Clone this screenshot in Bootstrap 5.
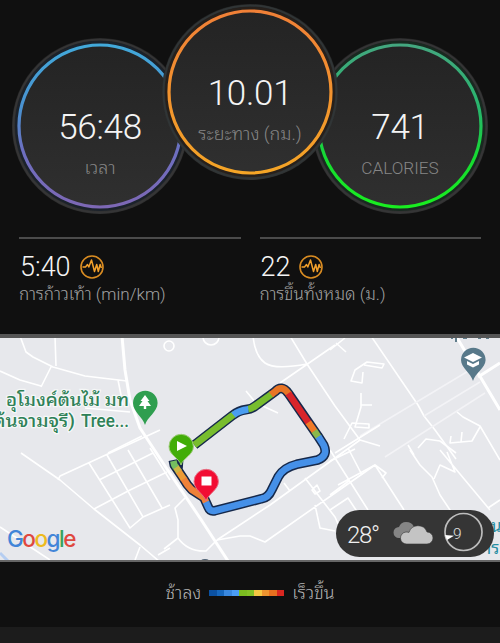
<!DOCTYPE html>
<html lang="th">
<head>
<meta charset="utf-8">
<meta name="viewport" content="width=device-width, initial-scale=1">
<title>Activity</title>
<link href="https://cdn.jsdelivr.net/npm/bootstrap@5.3.0/dist/css/bootstrap.min.css" rel="stylesheet">
<style>
body{background:#101010;font-family:Roboto,"Noto Sans Thai Looped",Loma,Garuda,Waree,"Droid Sans Thai","Noto Sans Thai",sans-serif;color:#f4f4f4;height:643px;overflow:hidden}
.dials{height:237px;padding:38px 12px 0}
.dial{width:176px;height:176px;flex:none;background:linear-gradient(#232323,#303030);display:grid;border-radius:50%}
.dial>*{grid-area:1/1}
.dial-main{margin:-34px -26px 0;z-index:1;position:relative}
.dial-num{font-weight:300;font-size:35px;line-height:40px;padding-top:70px;letter-spacing:-.3px}
.dial-cap{font-weight:300;font-size:17.2px;line-height:22px;color:#868686;padding-top:9px}
.wide-cap{font-size:18px}
.stats{height:97px;padding:0 19px;column-gap:19px}
.stat{width:222px;border-top:2px solid #4b4b4b;padding-top:12px}
.stat-num{font-weight:300;font-size:27px;line-height:32px;gap:9px}
.stat-num span{padding-left:1px}
.stat-cap{font-weight:300;font-size:17.1px;line-height:22px;color:#a2a2a2;white-space:nowrap}
.map-frame{border-top:4px solid #555;border-bottom:2px solid #666;height:228px;background:#e7e8ec}
.weather{right:6px;bottom:3px;width:158px;height:47px;background:#353535;border-radius:24px;color:#eee}
.brand{left:7px;bottom:7px;font:500 22.5px/28px Inter,sans-serif;letter-spacing:-1.5px}
.legend{height:65px;font-weight:300;font-size:17.8px;color:#b5b5b5;padding-bottom:3px}
.scale i{width:7.5px;height:6px}
.foot{background:#1c1c1c;height:16px}
</style>
<script src="https://cdn.jsdelivr.net/npm/bootstrap@5.3.0/dist/js/bootstrap.bundle.min.js"></script>
</head>
<body class="m-0">
<section class="dials d-flex">
  <div class="dial">
    <svg width="176" height="176"><defs><linearGradient id="gb" x2="0" y2="1"><stop stop-color="#42a9da"/><stop offset=".4" stop-color="#4a90cf"/><stop offset=".65" stop-color="#6d6fc0"/><stop offset="1" stop-color="#7d68b5"/></linearGradient></defs><circle cx="88" cy="88" r="86.500" fill="none" stroke="#353536" stroke-width="2"/><circle cx="88" cy="88" r="83" fill="none" stroke="#1b222b" stroke-width="4"/><circle cx="88" cy="88" r="81" fill="none" stroke="url(#gb)" stroke-width="3.2"/></svg>
    <div class="text-center"><div class="dial-num">56:48</div><div class="dial-cap wide-cap">เวลา</div></div>
  </div>
  <div class="dial dial-main">
    <svg width="176" height="176"><defs><linearGradient id="go" x2="0" y2="1"><stop stop-color="#f08037"/><stop offset="1" stop-color="#f5a526"/></linearGradient></defs><circle cx="88" cy="88" r="86.500" fill="none" stroke="#303536" stroke-width="2"/><circle cx="88" cy="88" r="83" fill="none" stroke="#27201b" stroke-width="4"/><circle cx="88" cy="88" r="81" fill="none" stroke="url(#go)" stroke-width="3.2"/></svg>
    <div class="text-center"><div class="dial-num">10.01</div><div class="dial-cap wide-cap">ระยะทาง (กม.)</div></div>
  </div>
  <div class="dial">
    <svg width="176" height="176"><defs><linearGradient id="gg" x2="0" y2="1"><stop stop-color="#43a77f"/><stop offset=".4" stop-color="#27b66c"/><stop offset=".7" stop-color="#15dc30"/><stop offset="1" stop-color="#19ee20"/></linearGradient></defs><circle cx="88" cy="88" r="86.500" fill="none" stroke="#353536" stroke-width="2"/><circle cx="88" cy="88" r="83" fill="none" stroke="#182a20" stroke-width="4"/><circle cx="88" cy="88" r="81" fill="none" stroke="url(#gg)" stroke-width="3.2"/></svg>
    <div class="text-center"><div class="dial-num">741</div><div class="dial-cap">CALORIES</div></div>
  </div>
</section>
<section class="stats d-flex align-items-start">
  <div class="stat"><div class="stat-num d-flex align-items-center"><span>5:40</span><svg width="24" height="24" viewBox="0 0 24 24" fill="none" stroke="#d98c22"><circle cx="12" cy="12" r="11" stroke-width="1.6"/><path d="M2.500 12H5.500l2-2.500 1.300 2.500L11.500 5l3 11.500 2.200-7 1.600 7 1.800-7 1.300 3.500" stroke="#f2a02b" stroke-width="1.500" stroke-linejoin="round"/></svg></div><div class="stat-cap">การก้าวเท้า (min/km)</div></div>
  <div class="stat"><div class="stat-num d-flex align-items-center"><span>22</span><svg width="24" height="24" viewBox="0 0 24 24" fill="none" stroke="#d98c22"><circle cx="12" cy="12" r="11" stroke-width="1.6"/><path d="M2.500 12H5.500l2-2.500 1.300 2.500L11.500 5l3 11.500 2.200-7 1.600 7 1.800-7 1.300 3.500" stroke="#f2a02b" stroke-width="1.500" stroke-linejoin="round"/></svg></div><div class="stat-cap">การขึ้นทั้งหมด (ม.)</div></div>
</section>
<section class="map-frame position-relative overflow-hidden">
<svg class="d-block" width="500" height="222" viewBox="0 338 500 222">
  <g fill="none" stroke="#fff" stroke-width="1.6" stroke-linejoin="round">
    <path d="M20 336l6 16 7 5 20 10 32 9 42 5M55 336l1 30M51 367l-10 20M0 371l20 9 21 6M130 412l-45-4M108 453l34-17M118 380l5 25"/>
    <path d="M122 336l3 34 5 30 10 28 25 38 35 52 30 46" stroke-width="3"/>
    <path d="M253 336q2 20 12 27t42 1M335 345l-55 38M290 336l17 28 28 42 25 34 20 6M246 391l10 12 22 10M360 440l-90 65-53 35"/>
    <circle cx="169" cy="346" r="5"/><circle cx="211" cy="337" r="8"/>
    <path d="M371 336l47 69 6 11 11 14 21 29M345 338l-15 12M336 343l10 9M363 372l-1 11-11-2 4-11 12-8 17 2-2 4-18-3M361 393v14l-6 20 14 1v-4l-17-1-8 16M361 405h11"/>
    <path d="M456 336l44 74M478 377l22-14" stroke-width="3"/>
    <path d="M360 436l110-66M424 416l56-34M385 457l100-64" stroke="#f3f3f6" stroke-width="1.5"/>
    <path d="M457 412l6 5 17 9 20 34M480 427l-8 14-22 2 1-7M462 432l-1 10M418 448l8-9 14 2 16 12"/>
    <path d="M21 453l39 27 34 29 46 36 20 17M58 480l2-4 50-23 50-23M89 463l41 65 13-11 27-12M107 455l36 62M128 450l34 58M150 448l20 32M94 509l36-19 37-18M99 480l54-27M0 527l50 33M140 547l-5 13M158 555l12-7"/>
    <path d="M217 540l23-4h10l15 6 70-49 40-28 29 45M185 498l-10 10 3 12v18q10 14 28 13l11-11M178 538l-14 11M305 478l30 39 9 20M315 505l5 23 15 3M284 483l6 8M312 490l5-5 3 6-5 3z"/>
    <path d="M330 450l38 60M348 448l14 27M330 461l25-12M338 485l37-20M375 465l11 8-4 5M410 450l10 15 12 12 8 18 12 18M440 450l50 60M447 452l8 20-15-7-6 14M488 508l12-8M330 495l20-15M330 510l18-12 10 15M380 425l-45 28M408 445l6 10"/>
  </g>
  <path d="M0 553l8 8" stroke="#b5cdf1" stroke-width="3"/>
  <ellipse cx="205" cy="561" rx="4" ry="2" fill="#526476"/>
  <g font-family="Roboto,'Noto Sans Thai Looped',Loma,Garuda,Waree,'Droid Sans Thai','Noto Sans Thai',sans-serif" font-weight="500" font-size="17.5" fill="#2f8157" stroke="#f5f7f7" stroke-width="2.5" paint-order="stroke">
    <text x="6" y="406" textLength="123" lengthAdjust="spacingAndGlyphs">อุโมงค์ต้นไม้ มท</text>
    <text x="-7" y="427" textLength="82" lengthAdjust="spacingAndGlyphs">ต้นจามจุรี)</text><text x="81" y="427" textLength="48" lengthAdjust="spacingAndGlyphs">Tree...</text>
  </g>
  <g font-family="Roboto,'Noto Sans Thai Looped',Loma,Garuda,Waree,'Droid Sans Thai','Noto Sans Thai',sans-serif" font-size="17" fill="#268da1"><text x="491" y="532">นเ</text><text x="484" y="554">าร</text></g>
  <path d="M451 338h2M456 338v4M463 338h4M478 338h3M486 338h3" stroke="#607d8b" stroke-width="2"/>
  <g transform="translate(165 375) scale(.33333)" fill="none" stroke-linejoin="round">
    <path d="M88 210L200 123Q222 106 242 104T275 90L330 50Q350 28 370 55L458 182 476 210Q491 242 458 255L395 268Q355 278 340 305L320 345Q310 368 290 371L150 407Q135 410 130 397L117 368 80 344Q66 330 55 310L28 270 25 255M28 270L54 272" stroke="#16294b" stroke-width="29"/>
    <g stroke-width="20">
      <path d="M88 210L200 123 209 117" stroke="#78bd2e"/><path d="M249 103Q262 100 275 90L322 56" stroke="#78bd2e"/><path d="M205 120Q222 106 250 103" stroke="#4a9df0"/>
      <path d="M318 59L330 50Q350 28 370 55L373 59" stroke="#e87424"/><path d="M370 55L432 145" stroke="#d9252b"/><path d="M430 142L449 169" stroke="#f07a27"/><path d="M448 168L461 187" stroke="#8bb84a"/>
      <path d="M460 185L476 210Q491 242 458 255L395 268Q355 278 340 305L320 345Q310 368 290 371L150 407Q135 410 130 397L122 379" stroke="#4590e8"/>
      <path d="M123 381L117 368 80 344Q66 330 55 310" stroke="#ef8138"/><path d="M56 312L40 288" stroke="#ed9b36"/><path d="M42 290L31 274" stroke="#cdb545"/><path d="M33 277L28 270 25 258" stroke="#75bd60"/>
    </g>
  </g>
  <path d="M145 425c-2-8-12-13-12-22a12.300 12.300 0 0 1 24.600 0c0 9-10.600 14-12.600 22z" fill="#2f9e4f"/>
  <path d="M145 395l4.500 6h-2l3.500 5h-4.800v3h-2.400v-3H139l3.500-5h-2z" fill="#fff"/>
  <path d="M473 381c-2-8-12-13-12-21a12.300 12.300 0 0 1 24.600 0c0 8-10.600 13-12.600 21z" fill="#58798a"/>
  <path d="M473 353l9 4.500-9 4.500-9-4.500zM467 361l6 3 6-3v3.500l-6 3-6-3z" fill="#fff"/>
  <path d="M181 465c-2-7-12-10-12-18.500a12.200 12.200 0 0 1 24.400 0c0 8.500-10.400 11.500-12.400 18.500z" fill="#42ad08" stroke="#9dcc79"/><path d="M177 441v10l10-5z" fill="#fff"/>
  <path d="M206 501c-2-7-12-11-12-19.500a12.200 12.200 0 0 1 24.400 0c0 8.500-10.400 12.500-12.400 19.500z" fill="#f20d33" stroke="#e67184"/><path d="M201.500 476.500h10v9h-10z" fill="#fff"/>
</svg>
<div class="brand position-absolute d-flex"><span style="color:#4285d8">G</span><span style="color:#df483f">o</span><span style="color:#edba20">o</span><span style="color:#4285d8">g</span><span style="color:#38a35b">l</span><span style="color:#df483f">e</span></div>
<div class="weather position-absolute">
  <svg class="d-block" width="158" height="47" viewBox="336 510 158 47">
    <text x="347" y="542.500" font-family="Roboto" font-weight="300" font-size="24" fill="#f0f0f0" textLength="33">28°</text>
    <path d="M399 538a5.500 5.500 0 0 1 0-11q2-5 7-5 6 0 8 5v11z" fill="#858585"/>
    <path d="M407 544a6 6 0 0 1-1-12q2 0 3 .4a9.500 9.500 0 0 1 18-.4 6 6 0 0 1 0 12z" fill="#c4c4c4" stroke="#353535" stroke-width=".6"/>
    <circle cx="463.500" cy="532" r="18.500" fill="none" stroke="#bdbdbd" stroke-width="1.700"/>
    <path d="M445 535l9 .8-7 4.200z" fill="#fff"/>
    <text x="453" y="539" font-family="Roboto" font-weight="300" font-size="15.500" fill="#e0e0e0">9</text>
  </svg>
</div>
</section>
<section class="legend d-flex align-items-center justify-content-center">
  <span>ช้าลง</span>
  <span class="scale d-flex mx-2"><i style="background:#0b51a2"></i><i style="background:#1667bd"></i><i style="background:#3988df"></i><i style="background:#4a9cf5"></i><i style="background:#7bbd20"></i><i style="background:#83c126"></i><i style="background:#f4c743"></i><i style="background:#ed942f"></i><i style="background:#e8701f"></i><i style="background:#d92720"></i></span>
  <span>เร็วขึ้น</span>
</section>
<div class="foot"></div>
</body>
</html>
